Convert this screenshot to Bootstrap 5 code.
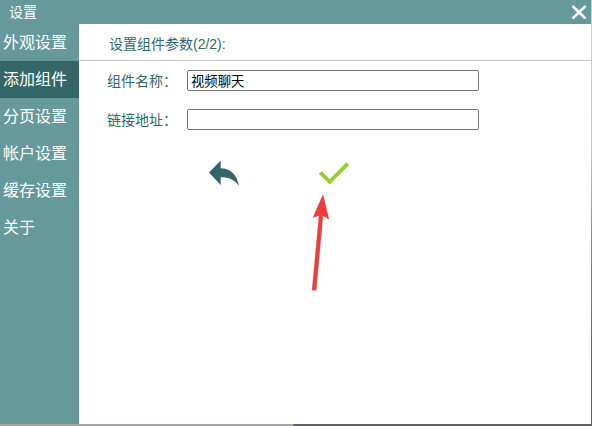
<!DOCTYPE html>
<html lang="zh-CN">
<head>
<meta charset="utf-8">
<meta name="viewport" content="width=device-width, initial-scale=1">
<title>设置</title>
<link rel="stylesheet" href="https://cdn.jsdelivr.net/npm/bootstrap@5.3.0/dist/css/bootstrap.min.css">
<style>
  body { height: 426px; font: 14px/20px "Liberation Sans", "Noto Sans CJK SC", sans-serif; color: #336666;
    padding: 0 1px 2px 0;
    background: linear-gradient(90deg, #aaa4a4 0 293px, #625f68 294px) 0 100% / 100% 2px no-repeat,
      linear-gradient(#cfcfcf 0, #cbc5c2 150px, #8c8686 240px, #6b6870 340px, #5f5f66); }
  .titlebar { height: 24px; background: #669999; color: #fff; padding: 0 4px 0 9px; }
  .side { width: 79px; background: #669999; }
  .side .nav-link { height: 37px; padding: 0 0 0 3px; font-size: 16px; line-height: 38px; color: #fff; border-radius: 0; }
  .side .nav-link.active { background: #336666; }
  .heading { height: 37px; padding: 10px 0 0 30px; border-bottom: 1px solid #c8c8c8; }
  .settings { padding: 9px 0 0 28px; }
  .field-row { height: 21px; margin-bottom: 18px; }
  .field-row label { width: 80px; }
  .field-row .form-control { width: 292px; height: 21px; padding: 1px 3px; border: 1px solid #767676; border-radius: 2px;
    font-size: 13.333px; line-height: 17px; color: #000; box-shadow: none; }
  .icon-btn { padding: 0; border: 0; line-height: 0; }
  .actions { padding: 12px 0 0 102px; gap: 79px; }
  .pointer { left: 311px; top: 193px; }
</style>
<script src="https://cdn.jsdelivr.net/npm/bootstrap@5.3.0/dist/js/bootstrap.bundle.min.js"></script>
</head>
<body class="overflow-hidden">
<div class="d-flex flex-column h-100 bg-white position-relative">
  <header class="titlebar d-flex justify-content-between align-items-center">
    <span>设置</span>
    <button class="btn icon-btn" type="button" aria-label="关闭">
      <svg width="16" height="16" viewBox="0 0 16 16"><path d="M1.5 2 14.5 14.5M14.5 2 1.5 14.5" stroke="#fff" stroke-width="2.5" fill="none"/></svg>
    </button>
  </header>
  <div class="d-flex flex-grow-1">
    <nav class="side nav flex-column flex-nowrap flex-shrink-0">
      <a class="nav-link" href="#">外观设置</a>
      <a class="nav-link active" href="#">添加组件</a>
      <a class="nav-link" href="#">分页设置</a>
      <a class="nav-link" href="#">帐户设置</a>
      <a class="nav-link" href="#">缓存设置</a>
      <a class="nav-link" href="#">关于</a>
    </nav>
    <main class="flex-grow-1">
      <div class="heading">设置组件参数(2/2):</div>
      <form class="settings">
        <div class="field-row d-flex align-items-center">
          <label for="name">组件名称：</label>
          <input class="form-control" id="name" type="text" value="视频聊天">
        </div>
        <div class="field-row d-flex align-items-center">
          <label for="url">链接地址：</label>
          <input class="form-control" id="url" type="text">
        </div>
        <div class="actions d-flex">
          <button class="btn icon-btn" type="button" aria-label="返回">
            <svg width="31" height="28" viewBox="0 0 31 28"><path d="M0 12.6 11.7.6V8.3C21 8.3 28 14.5 30 26 25.5 19.8 20 17.3 11.7 17.3V25Z" fill="#336666"/></svg>
          </button>
          <button class="btn icon-btn" type="button" aria-label="确定">
            <svg width="31" height="28" viewBox="0 0 31 28"><path d="M1.3 12.5 10.7 21.8 28.8 3.7" fill="none" stroke="#99cc33" stroke-width="4"/></svg>
          </button>
        </div>
      </form>
    </main>
  </div>
  <svg class="pointer position-absolute" width="20" height="100" viewBox="0 0 20 100"><path d="M12 1.5 18 26.2 12 22.8 5.2 97.2H1L8 22.4 1.8 24.7Z" fill="#f43b3b" stroke="#8a5555" stroke-opacity=".35" stroke-width=".6"/></svg>
</div>
</body>
</html>
